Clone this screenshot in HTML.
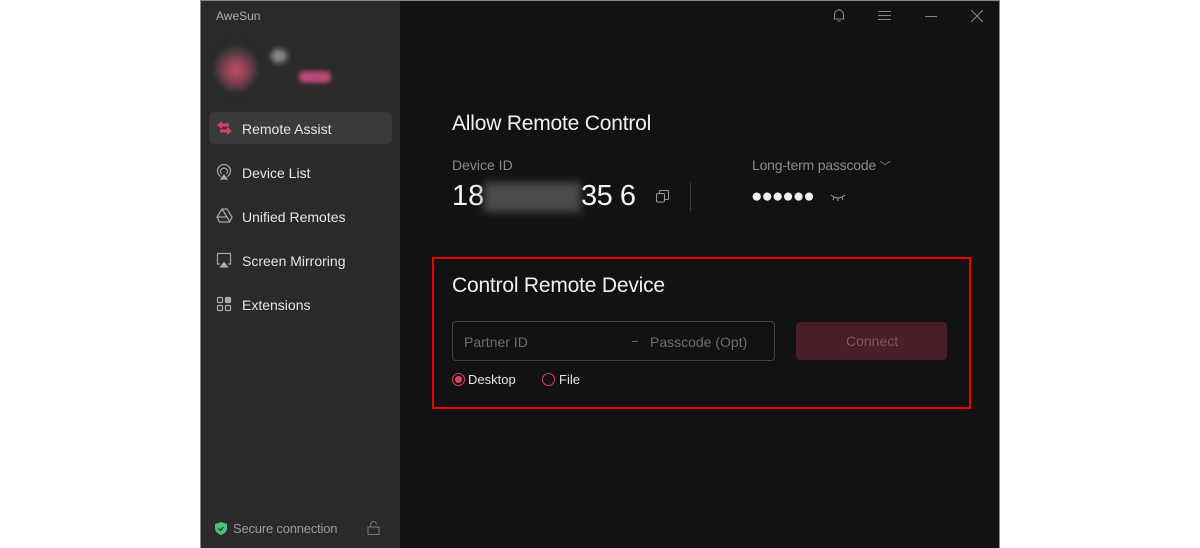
<!DOCTYPE html>
<html><head><style>
*{margin:0;padding:0;box-sizing:border-box}
body{width:1200px;height:548px;background:#fff;position:relative;overflow:hidden;font-family:"Liberation Sans",sans-serif}
.win{position:absolute;left:200px;top:0;width:800px;height:548px;background:#121212;box-shadow:inset 1px 1px 0 #888,inset -1px 0 0 #888}
.side{position:absolute;left:1px;top:1px;width:199px;height:547px;background:#2a2a2a}
.t{position:absolute;white-space:nowrap}
.nav{position:absolute;left:41px;font-size:14px;color:#e6e6e6}
.ico{position:absolute;left:16px}
</style></head><body>
<div class="win">
<div class="side">
<div class="t" style="left:15px;top:8px;font-size:12px;color:#b0b0b0">AweSun</div>
<div style="position:absolute;left:14px;top:44px;width:42px;height:46px;border-radius:50%;background:radial-gradient(circle at 50% 55%,#c0506a 0,#8a4050 35%,#3a3a3a 65%,#2a2a2a 80%);filter:blur(3px)"></div>
<div style="position:absolute;left:70px;top:48px;width:16px;height:14px;border-radius:50%;background:#8a8a8a;filter:blur(3px)"></div>
<div style="position:absolute;left:98px;top:70px;width:32px;height:12px;border-radius:5px;background:#b84878;filter:blur(2px)"></div>
<div style="position:absolute;left:8px;top:111px;width:183px;height:32px;border-radius:6px;background:#3a3a3a"></div>
<svg class="ico" style="top:119px;left:15px" width="17" height="16" viewBox="0 0 17 16"><path d="M1 5l5-4v2.5h7v3H6V9z M16 11l-5 4v-2.5H4v-3h7V7z" fill="#e0405e"/></svg>
<div class="nav" style="top:120px">Remote Assist</div>
<svg class="ico" style="top:163px;left:15px" width="16" height="16" viewBox="0 0 16 16" fill="none" stroke="#aaa" stroke-width="1.2"><path d="M4.5 12.5A6.5 6.5 0 1 1 11.5 12.5"/><path d="M5.5 10A3.5 3.5 0 1 1 10.5 10"/><path d="M5 15h6L8 11z" fill="#aaa"/></svg>
<div class="nav" style="top:164px">Device List</div>
<svg class="ico" style="top:207px;left:15px" width="17" height="16" viewBox="0 0 17 16" fill="none" stroke="#aaa" stroke-width="1.2"><path d="M6 1h5l5 8-2.5 5h-10L1 9z M6 1l5 8 M1 9h10l3 5"/></svg>
<div class="nav" style="top:208px">Unified Remotes</div>
<svg class="ico" style="top:251px;left:15px" width="16" height="16" viewBox="0 0 16 16" fill="none" stroke="#aaa" stroke-width="1.2"><path d="M4 12H1.5V1.5h13V12H12"/><path d="M4.5 15h7L8 10.5z" fill="#aaa"/></svg>
<div class="nav" style="top:252px">Screen Mirroring</div>
<svg class="ico" style="top:295px;left:15px" width="16" height="16" viewBox="0 0 16 16" fill="none" stroke="#aaa" stroke-width="1.2"><rect x="1.5" y="1.5" width="5" height="5" rx="1"/><rect x="9.5" y="1.5" width="5" height="5" rx="1" fill="#aaa"/><rect x="1.5" y="9.5" width="5" height="5" rx="1"/><rect x="9.5" y="9.5" width="5" height="5" rx="1"/></svg>
<div class="nav" style="top:296px">Extensions</div>
<svg style="position:absolute;left:14px;top:521px" width="12" height="13" viewBox="0 0 12 13"><path d="M6 0l6 2v4c0 4-3 6-6 7C3 12 0 10 0 6V2z" fill="#4cc07a"/><path d="M3.5 6.5l2 2 3-3.5" stroke="#1a4a2a" stroke-width="1.3" fill="none"/></svg>
<div class="t" style="left:32px;top:520px;font-size:13px;color:#9a9a9a;letter-spacing:-0.2px">Secure connection</div>
<svg style="position:absolute;left:166px;top:520px" width="13" height="14" viewBox="0 0 13 14" fill="none" stroke="#777" stroke-width="1.1"><rect x="1" y="6" width="11" height="7.5"/><path d="M3.5 6V3.5a3 3 0 0 1 6 0"/></svg>
</div>
<svg style="position:absolute;left:632px;top:8px" width="14" height="15" viewBox="0 0 14 15" fill="none" stroke="#888" stroke-width="1.1"><path d="M2.5 11V6.5a4.5 4.5 0 0 1 9 0V11H1.5h11"/><path d="M7 2V1 M5.5 13h3"/></svg>
<svg style="position:absolute;left:678px;top:10px" width="13" height="11" stroke="#888" stroke-width="1.1"><path d="M0 1.5h13M0 5.5h13M0 9.5h13"/></svg>
<div style="position:absolute;left:725px;top:16px;width:12px;height:1px;background:#888"></div>
<svg style="position:absolute;left:771px;top:10px" width="12" height="12" stroke="#888" stroke-width="1.1"><path d="M0 0l12 12M12 0L0 12"/></svg>
<div class="t" style="left:252px;top:112px;font-size:21px;color:#f0f0f0;letter-spacing:-0.2px">Allow Remote Control</div>
<div class="t" style="left:252px;top:157px;font-size:14px;color:#8a8a8a">Device ID</div>
<div class="t" style="left:252px;top:180px;font-size:29px;color:#f4f4f4">18</div>
<div style="position:absolute;left:284px;top:182px;width:97px;height:30px;background:#4a4a4a;filter:blur(4px)"></div>
<div class="t" style="left:381px;top:180px;font-size:29px;color:#f4f4f4;letter-spacing:-0.5px">35 6</div>
<svg style="position:absolute;left:456px;top:190px" width="13" height="13" fill="none" stroke="#999" stroke-width="1.1"><rect x="0.5" y="3.5" width="8" height="8.5" rx="1.5"/><path d="M3.5 3.5V1.5a1 1 0 0 1 1-1h7a1 1 0 0 1 1 1v7a1 1 0 0 1-1 1H9"/></svg>
<div style="position:absolute;left:490px;top:183px;width:1px;height:28px;background:#444"></div>
<div class="t" style="left:552px;top:157px;font-size:14px;color:#8a8a8a;letter-spacing:-0.2px">Long-term passcode <span style="font-size:11px">﹀</span></div>
<div class="t" style="left:551px;top:186px;font-size:19px;color:#f0f0f0;letter-spacing:-1px">●●●●●●</div>
<svg style="position:absolute;left:630px;top:193px" width="16" height="8" fill="none" stroke="#999" stroke-width="1"><path d="M1 2q7 6 14 0M4 4l-1 3M8 5v3M12 4l1 3"/></svg>
<div style="position:absolute;left:232px;top:257px;width:539px;height:152px;border:2px solid #e00"></div>
<div class="t" style="left:252px;top:274px;font-size:21px;color:#f0f0f0;letter-spacing:-0.2px">Control Remote Device</div>
<div style="position:absolute;left:252px;top:321px;width:323px;height:40px;border:1px solid #444;border-radius:4px"></div>
<div class="t" style="left:264px;top:334px;font-size:14px;color:#6e6e6e">Partner ID</div>
<div style="position:absolute;left:432px;top:341px;width:6px;height:1px;background:#666"></div>
<div class="t" style="left:450px;top:334px;font-size:14px;color:#6e6e6e">Passcode (Opt)</div>
<div style="position:absolute;left:596px;top:322px;width:151px;height:38px;background:#4a1e28;border-radius:4px"></div>
<div class="t" style="left:646px;top:333px;font-size:14px;color:#7a5a60">Connect</div>
<div style="position:absolute;left:252px;top:373px;width:13px;height:13px;border:1px solid #e0405e;border-radius:50%;padding:2px"><div style="width:7px;height:7px;border-radius:50%;background:#e0405e"></div></div>
<div class="t" style="left:268px;top:372px;font-size:13px;color:#e6e6e6">Desktop</div>
<div style="position:absolute;left:342px;top:373px;width:13px;height:13px;border:1px solid #e0405e;border-radius:50%"></div>
<div class="t" style="left:359px;top:372px;font-size:13px;color:#e6e6e6">File</div>
</div>
</body></html>
